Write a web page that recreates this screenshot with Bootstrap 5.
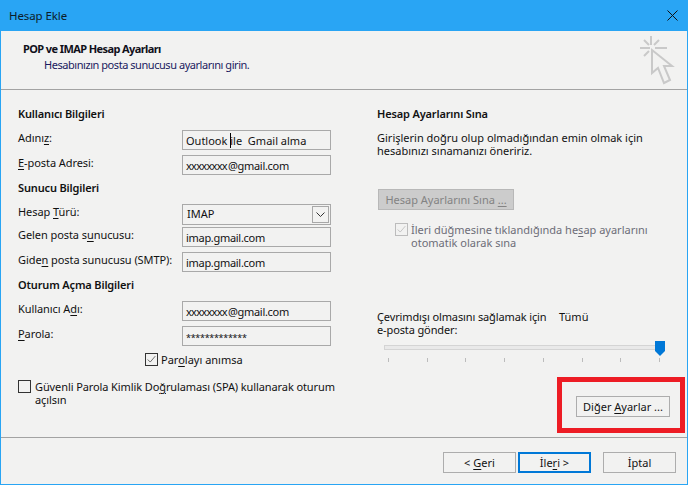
<!DOCTYPE html>
<html lang="tr">
<head>
    <meta charset="UTF-8">
    <title>Hesap Ekle</title>
    <link href="https://cdn.jsdelivr.net/npm/bootstrap@5.3.0/dist/css/bootstrap.min.css" rel="stylesheet">
    <style>
        html, body { height: 100%; overflow: hidden; }
        body { background: #f2f2f1; color: #111; font-family: "Noto Sans", "Open Sans", sans-serif; font-size: 11px; line-height: 13px; }
        u { text-underline-offset: 2px; text-decoration-thickness: 1px; }

        .win { height: 485px; border: 1px solid #29a5f4; border-top: 0; }
        .win-title { height: 31px; margin: 0 -1px; padding: 0 10px 0 9px; background: #29a5f4; color: #0c1c28; font-size: 11.5px; letter-spacing: -.1px; }
        .win-head { height: 59px; padding: 11px 11px 0 22px; border-bottom: 1px solid #a3a3a3; }
        .win-head h1 { font-size: 11px; line-height: 13px; font-weight: 700; letter-spacing: -.6px; margin: 0 0 3px; color: #10101a; }
        .win-head p { margin: 0 0 0 21px; color: #1a1a60; letter-spacing: -.45px; }
        .win-main { height: 347px; }

        .col-left { width: 345px; padding: 16px 0 0 17px; }
        .col-right { padding: 16px 0 0 31px; width: 341px; }
        .sec-title { font-size: 11px; font-weight: 600; line-height: 16px; letter-spacing: -.15px; margin: 0 0 8px; }
        .sec-title.next-sec { margin-top: 5px; }

        .field-row { height: 20px; }
        .field-row.spaced { margin-bottom: 5px; }
        .field-row.after-combo { margin-top: 3px; }
        .field-row label { width: 164px; margin-top: 1px; white-space: nowrap; letter-spacing: -.07px; }
        .field-box { width: 149px; height: 20px; padding: 2px 0 0 3px; border: 1px solid #a9a9a9; border-radius: 0; background: transparent; color: #111; font-size: 11px; line-height: 15px; white-space: pre; }
        .addr-val { letter-spacing: -.3px; }
        .xrun { letter-spacing: -.7px; margin-right: 1px; }
        .stars { font-size: 9px; letter-spacing: -.3px; }
        .txt-caret { display: inline-block; width: 1px; height: 15px; margin: 0 -1px 0 0; background: #000; vertical-align: top; }
        .combo { height: 21px; padding: 1px 1px 0 4px; }
        .combo-btn { width: 17px; height: 17px; border: 1px solid #a8a8a8; }

        .form-check-input.win-check { width: 13px; height: 13px; margin: 0; float: none; flex: none; border: 1px solid #333; border-radius: 0; background-color: transparent; box-shadow: none; opacity: 1; }
        .form-check-input.win-check:checked[type=checkbox] { background-color: transparent; border-color: #333; --bs-form-check-bg-image: url("data:image/svg+xml,%3csvg xmlns='http://www.w3.org/2000/svg' viewBox='0 0 13 13'%3e%3cpath fill='none' stroke='%23555' d='M2 6.5l3 3 6-7'/%3e%3c/svg%3e"); }
        .form-check-input.win-check:disabled { border-color: #bcbcbc; opacity: 1; }
        .form-check-input.win-check:checked:disabled[type=checkbox] { border-color: #bcbcbc; --bs-form-check-bg-image: url("data:image/svg+xml,%3csvg xmlns='http://www.w3.org/2000/svg' viewBox='0 0 13 13'%3e%3cpath fill='none' stroke='%23bcbcbc' d='M2 6.5l3 3 6-7'/%3e%3c/svg%3e"); }
        .remember-row { margin: 7px 0 0 127px; }
        .spa-row { margin-top: 14px; gap: 4px; letter-spacing: -.1px; }
        .check-gap { gap: 3px; }

        .btn.win-btn { height: 21px; padding: 0; border: 1px solid #adadad; border-radius: 0; background: transparent; color: #111; font-size: 11px; line-height: 17px; --bs-btn-bg: transparent; }
        .btn.win-btn.primary-btn { border: 2px solid #0078d7; line-height: 15px; }
        .btn.win-btn:disabled { width: 136px; margin: 32px 0 0 1px; align-self: flex-start; background: #ccc; border-color: #b8b8b8; color: #838383; opacity: 1; }

        .test-note { margin: 1px 0 0; }
        .auto-test { margin: 13px 0 0 18px; }
        .muted-text { color: #6d6d78; }
        .offline-row { margin-top: 61px; }
        .offline-row .offline-label { width: 182px; letter-spacing: -.12px; }
        .slider-wrap { position: relative; width: 281px; height: 21px; margin: 5px 0 0 7px; }
        .slider-track { height: 5px; margin-top: 4px; border: 1px solid #d4d4d4; background: #e9e9e9; }
        .slider-thumb { position: absolute; right: 0; top: 0; }
        .slider-ticks { padding: 8px 5px 0 4px; }
        .slider-ticks i { display: block; width: 1px; height: 4px; background: #bcbcbc; }

        .red-mark { position: absolute; left: 556px; top: 377px; width: 128px; height: 56px; border: 5px solid #ed1c24; }
        .other-btn { width: 94px; margin: 34px 0 0 199px; }
        .win-foot { height: 47px; padding: 14px 11px 0 0; border-top: 1px solid #a3a3a3; }
        .win-foot .btn { width: 73px; }
        .win-foot .btn + .btn { margin-left: 2px; }
        .win-foot .btn.cancel-btn { margin-left: 12px; }
        .head-icon { margin-top: -8px; }
    </style>
</head>
<body>

<div class="win d-flex flex-column position-relative">
    <div class="win-title d-flex align-items-center justify-content-between">
        <span>Hesap Ekle</span>
        <svg width="11" height="11" viewBox="0 0 11 11"><path d="M.5.5l10 10M10.5.5l-10 10" stroke="#111" fill="none"/></svg>
    </div>

    <div class="win-head d-flex justify-content-between">
        <div>
            <h1>POP ve IMAP Hesap Ayarları</h1>
            <p>Hesabınızın posta sunucusu ayarlarını girin.</p>
        </div>
        <svg width="40" height="52" viewBox="0 0 40 52" class="flex-shrink-0 head-icon" fill="none" stroke="#c9c9c9" stroke-width="2">
            <path d="M16 16v23l6-5 6 15 6-3-6-14h8z"/>
            <path d="M4 14h10M19 14h12M15 2v9M8 6l5 5M23 6l-5 5M8 22l5-5"/>
        </svg>
    </div>

    <div class="win-main d-flex">
        <div class="col-left d-flex flex-column">
            <h2 class="sec-title">Kullanıcı Bilgileri</h2>
            <div class="field-row spaced d-flex">
                <label>Adını<u>z</u>:</label>
                <div class="form-control field-box">Outlook <span class="txt-caret"></span>ile  Gmail alma</div>
            </div>
            <div class="field-row d-flex">
                <label><u>E</u>-posta Adresi:</label>
                <div class="form-control field-box addr-val"><span class="xrun">xxxxxxxx</span>@gmail.com</div>
            </div>
            <h2 class="sec-title next-sec">Sunucu Bilgileri</h2>
            <div class="field-row d-flex">
                <label>Hesap <u>T</u>ürü:</label>
                <div class="form-control field-box combo d-flex justify-content-between">
                    <span>IMAP</span>
                    <span class="combo-btn d-flex align-items-center justify-content-center">
                        <svg width="9" height="5" viewBox="0 0 9 5"><path d="M.5.5l4 4 4-4" fill="none" stroke="#333"/></svg>
                    </span>
                </div>
            </div>
            <div class="field-row spaced after-combo d-flex">
                <label>Gelen posta s<u>u</u>nucusu:</label>
                <div class="form-control field-box addr-val">imap.gmail.com</div>
            </div>
            <div class="field-row d-flex">
                <label>Gide<u>n</u> posta sunucusu (SMTP):</label>
                <div class="form-control field-box addr-val">imap.gmail.com</div>
            </div>
            <h2 class="sec-title next-sec">Oturum Açma Bilgileri</h2>
            <div class="field-row spaced d-flex">
                <label>Kullanıcı A<u>d</u>ı:</label>
                <div class="form-control field-box addr-val"><span class="xrun">xxxxxxxx</span>@gmail.com</div>
            </div>
            <div class="field-row d-flex">
                <label><u>P</u>arola:</label>
                <div class="form-control field-box"><span class="stars">*************</span></div>
            </div>
            <div class="remember-row d-flex align-items-center check-gap">
                <input class="form-check-input win-check" type="checkbox" checked>
                <span>Par<u>o</u>layı anımsa</span>
            </div>
            <div class="spa-row d-flex">
                <input class="form-check-input win-check" type="checkbox">
                <span>Güvenli Parola Kimlik Do<u>ğ</u>rulaması (SPA) kullanarak oturum açılsın</span>
            </div>
        </div>

        <div class="col-right d-flex flex-column">
            <h2 class="sec-title">Hesap Ayarlarını Sına</h2>
            <p class="test-note">Girişlerin doğru olup olmadığından emin olmak için hesabınızı sınamanızı öneririz.</p>
            <button class="btn win-btn" disabled>Hesap Ayarlarını Sına <u>...</u></button>
            <div class="auto-test d-flex check-gap">
                <input class="form-check-input win-check" type="checkbox" checked disabled>
                <span class="muted-text">İleri düğmesine tıklandığında he<u>s</u>ap ayarlarını otomatik olarak sına</span>
            </div>
            <div class="offline-row d-flex">
                <span class="offline-label">Çevrimdışı olmasını sağlamak için<br>e-posta gönder:</span>
                <span>Tümü</span>
            </div>
            <div class="slider-wrap">
                <div class="slider-track"></div>
                <svg class="slider-thumb" width="10" height="15" viewBox="0 0 10 15"><path d="M0 0h10v10l-5 5-5-5z" fill="#0078d7"/></svg>
                <div class="slider-ticks d-flex justify-content-between">
                    <i></i><i></i><i></i><i></i><i></i><i></i><i></i><i></i>
                </div>
            </div>
            <button class="btn win-btn other-btn">Diğer <u>A</u>yarlar ...</button>
        </div>
    </div>

    <div class="win-foot d-flex justify-content-end">
        <button class="btn win-btn">&lt; <u>G</u>eri</button>
        <button class="btn win-btn primary-btn">İle<u>r</u>i &gt;</button>
        <button class="btn win-btn cancel-btn">İptal</button>
    </div>

    <div class="red-mark"></div>
</div>

<script src="https://cdn.jsdelivr.net/npm/bootstrap@5.3.0/dist/js/bootstrap.bundle.min.js"></script>
</body>
</html>
